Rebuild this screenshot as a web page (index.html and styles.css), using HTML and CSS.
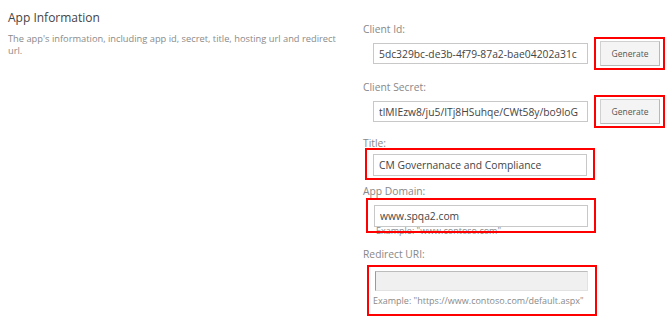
FILE: index.html
```html
<!DOCTYPE html>
<html>
  <head>
    <meta charset="utf-8">
    <title>App Information</title>
    <link rel="stylesheet" href="styles.css">
  </head>
  <body>
    <div class="app_info">
      <section class="intro">
        <h2>App Information</h2>
        <p>The app's information, including app id, secret, title, hosting url and redirect url.</p>
      </section>

      <section class="fields">
        <div class="field">
          <label for="client_id">Client Id:</label>
          <div class="row">
            <input type="text" id="client_id" value="5dc329bc-de3b-4f79-87a2-bae04202a31c">
            <span class="mark mark_button"><button type="button">Generate</button></span>
          </div>
        </div>

        <div class="field field_secret">
          <label for="client_secret">Client Secret:</label>
          <div class="row">
            <input type="text" id="client_secret" value="tlMIEzw8/ju5/ITj8HSuhqe/CWt58y/bo9loG">
            <span class="mark mark_button"><button type="button">Generate</button></span>
          </div>
        </div>

        <div class="field field_title">
          <label for="title">Title:</label>
          <div class="mark mark_input">
            <input type="text" id="title" value="CM Governanace and Compliance">
          </div>
        </div>

        <div class="field field_domain">
          <label for="domain">App Domain:</label>
          <div class="mark mark_input">
            <input type="text" id="domain" value="www.spqa2.com">
          </div>
          <div class="example example_domain">Example: "www.contoso.com"</div>
        </div>

        <div class="field field_redirect">
          <label for="redirect">Redirect URI:</label>
          <div class="mark mark_input mark_redirect">
            <input type="text" id="redirect" class="input_empty" value="">
            <div class="example">Example: "https://www.contoso.com/default.aspx"</div>
          </div>
        </div>
      </section>
    </div>
  </body>
</html>
```

FILE: styles.css
```css
body {
  margin: 0;
  font-family: "Open Sans", "Noto Sans", sans-serif;
  background-color: #fff;
  color: #444;
}

.app_info {
  display: flex;
  align-items: flex-start;
}

/* left column */
.intro {
  width: 355px;
  box-sizing: border-box;
  padding: 10px 14px 0 8px;
}

.intro h2 {
  margin: 0;
  font-size: 12px;
  line-height: 16px;
  font-weight: normal;
  color: #444;
}

.intro p {
  margin: 7px 0 0;
  font-size: 9.3px;
  line-height: 12px;
  color: #8a8a8a;
}

/* right column */
.fields {
  padding-top: 22px;
  padding-left: 8px;
}

.field label {
  display: block;
  font-size: 10.3px;
  line-height: 14px;
  color: #888;
}

.row {
  display: flex;
  align-items: center;
  margin-top: 1px;
}

input {
  width: 215px;
  height: 21px;
  box-sizing: border-box;
  margin: 0 0 0 10px;
  padding: 0 5px;
  border: 1px solid #c8c8c8;
  font-family: "Open Sans", "Noto Sans", sans-serif;
  font-size: 10.3px;
  color: #444;
  outline: none;
}

.mark {
  border: 2px solid #f00;
}

.mark_button {
  display: inline-block;
  margin-left: 6px;
  padding: 2px 3px 2px 4px;
}

button {
  display: block;
  width: 60px;
  height: 25px;
  border: 1px solid #d0d0d0;
  border-right-color: #b8b8b8;
  border-bottom-color: #b8b8b8;
  background-color: #f4f4f4;
  font-family: "Open Sans", "Noto Sans", sans-serif;
  font-size: 8.5px;
  color: #555;
  padding: 0;
}

.field_secret {
  margin-top: 10px;
}

.field_title {
  margin-top: 8px;
}

.mark_input {
  width: 226px;
  margin-left: 2px;
  margin-top: -2px;
  padding: 2px 0;
}

.mark_input input {
  margin-left: 6px;
  width: 214px;
  height: 22px;
}

.field_domain {
  margin-top: 4px;
}

.field_domain .mark_input {
  margin-left: 3px;
  margin-top: 0;
  padding: 3px 0 4px;
}

.example {
  font-size: 9px;
  line-height: 12px;
  color: #8a8a8a;
}

.example_domain {
  margin-top: -8px;
  margin-left: 13px;
  position: relative;
  z-index: -1;
}

.field_redirect {
  margin-top: 10px;
}

.mark_redirect {
  margin-left: 4px;
  margin-top: 4px;
  padding: 1px 0 7px;
}

.mark_redirect input {
  width: 213px;
  height: 20px;
  margin-left: 6px;
}

.mark_redirect .example {
  margin: 4px 0 0 4px;
}

.input_empty {
  background-color: #f0f0f0;
  border-color: #e2e2e2;
  border-left-color: #9a9a9a;
  border-top-color: #bcbcbc;
}
```
